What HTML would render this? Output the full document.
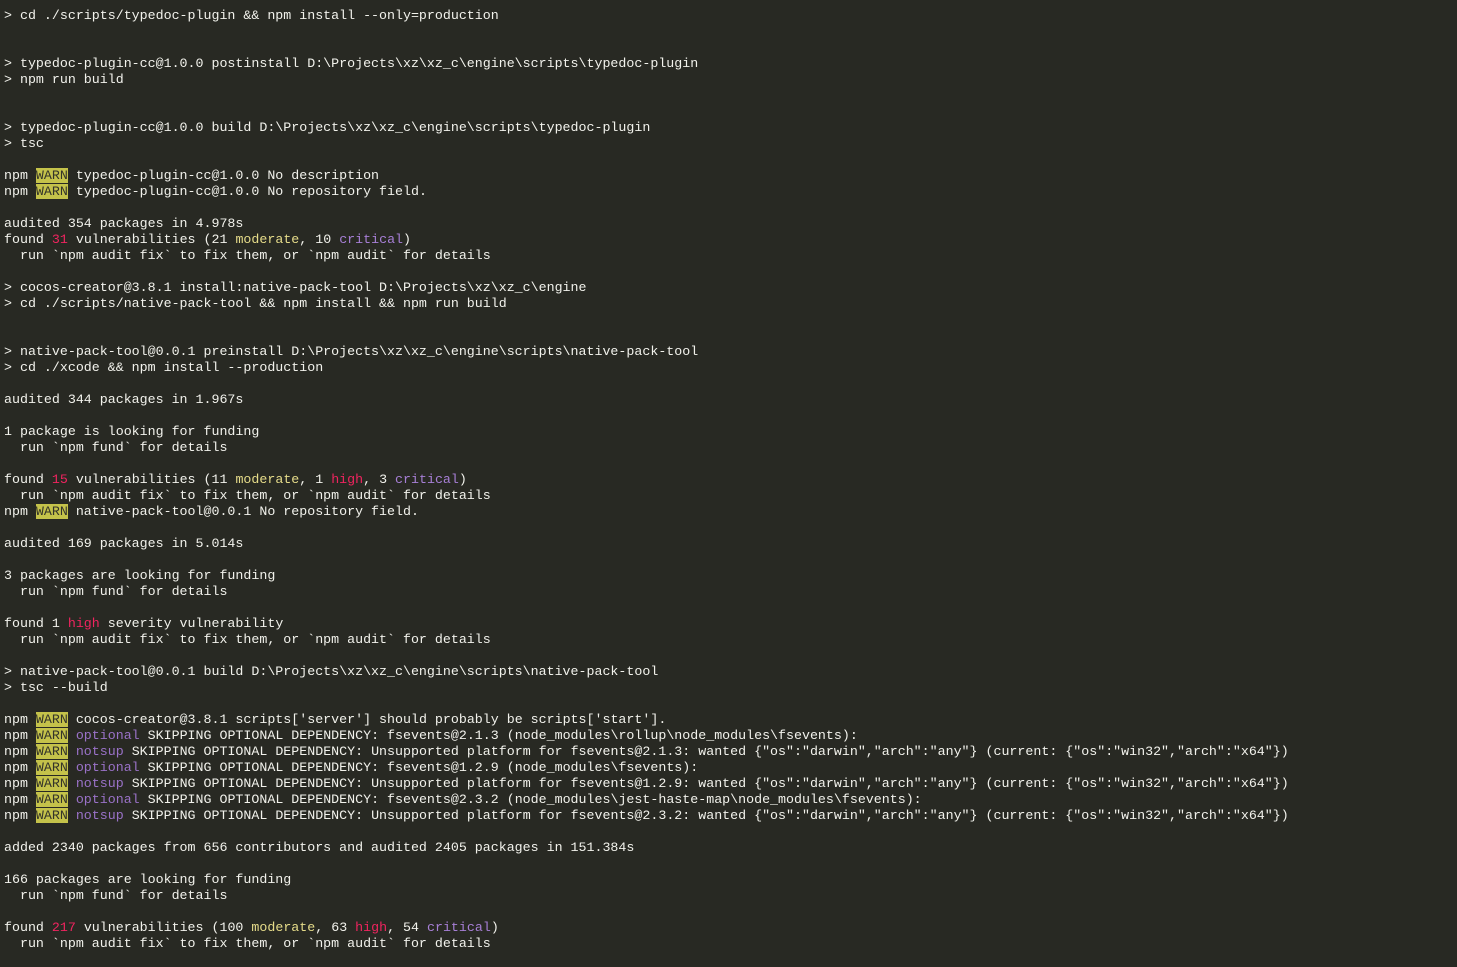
<!DOCTYPE html>
<html><head><meta charset="utf-8"><style>
html,body{margin:0;padding:0;background:#282923;width:1457px;height:967px;overflow:hidden}
pre{margin:0;position:absolute;left:4px;top:8px;font-family:"Liberation Mono",monospace;font-size:13.3px;line-height:16px;color:#f2f2ec}
.w{background:#c4c24a;color:#33332a}
.r{color:#f0245f}
.y{color:#e6dc8a}
.p{color:#a77fd6}
.o{color:#9a72c8}
</style></head><body>
<pre>&gt; cd ./scripts/typedoc-plugin &amp;&amp; npm install --only=production


&gt; typedoc-plugin-cc@1.0.0 postinstall D:\Projects\xz\xz_c\engine\scripts\typedoc-plugin
&gt; npm run build


&gt; typedoc-plugin-cc@1.0.0 build D:\Projects\xz\xz_c\engine\scripts\typedoc-plugin
&gt; tsc

npm <span class="w">WARN</span> typedoc-plugin-cc@1.0.0 No description
npm <span class="w">WARN</span> typedoc-plugin-cc@1.0.0 No repository field.

audited 354 packages in 4.978s
found <span class="r">31</span> vulnerabilities (21 <span class="y">moderate</span>, 10 <span class="p">critical</span>)
  run `npm audit fix` to fix them, or `npm audit` for details

&gt; cocos-creator@3.8.1 install:native-pack-tool D:\Projects\xz\xz_c\engine
&gt; cd ./scripts/native-pack-tool &amp;&amp; npm install &amp;&amp; npm run build


&gt; native-pack-tool@0.0.1 preinstall D:\Projects\xz\xz_c\engine\scripts\native-pack-tool
&gt; cd ./xcode &amp;&amp; npm install --production

audited 344 packages in 1.967s

1 package is looking for funding
  run `npm fund` for details

found <span class="r">15</span> vulnerabilities (11 <span class="y">moderate</span>, 1 <span class="r">high</span>, 3 <span class="p">critical</span>)
  run `npm audit fix` to fix them, or `npm audit` for details
npm <span class="w">WARN</span> native-pack-tool@0.0.1 No repository field.

audited 169 packages in 5.014s

3 packages are looking for funding
  run `npm fund` for details

found 1 <span class="r">high</span> severity vulnerability
  run `npm audit fix` to fix them, or `npm audit` for details

&gt; native-pack-tool@0.0.1 build D:\Projects\xz\xz_c\engine\scripts\native-pack-tool
&gt; tsc --build

npm <span class="w">WARN</span> cocos-creator@3.8.1 scripts['server'] should probably be scripts['start'].
npm <span class="w">WARN</span> <span class="o">optional</span> SKIPPING OPTIONAL DEPENDENCY: fsevents@2.1.3 (node_modules\rollup\node_modules\fsevents):
npm <span class="w">WARN</span> <span class="o">notsup</span> SKIPPING OPTIONAL DEPENDENCY: Unsupported platform for fsevents@2.1.3: wanted {"os":"darwin","arch":"any"} (current: {"os":"win32","arch":"x64"})
npm <span class="w">WARN</span> <span class="o">optional</span> SKIPPING OPTIONAL DEPENDENCY: fsevents@1.2.9 (node_modules\fsevents):
npm <span class="w">WARN</span> <span class="o">notsup</span> SKIPPING OPTIONAL DEPENDENCY: Unsupported platform for fsevents@1.2.9: wanted {"os":"darwin","arch":"any"} (current: {"os":"win32","arch":"x64"})
npm <span class="w">WARN</span> <span class="o">optional</span> SKIPPING OPTIONAL DEPENDENCY: fsevents@2.3.2 (node_modules\jest-haste-map\node_modules\fsevents):
npm <span class="w">WARN</span> <span class="o">notsup</span> SKIPPING OPTIONAL DEPENDENCY: Unsupported platform for fsevents@2.3.2: wanted {"os":"darwin","arch":"any"} (current: {"os":"win32","arch":"x64"})

added 2340 packages from 656 contributors and audited 2405 packages in 151.384s

166 packages are looking for funding
  run `npm fund` for details

found <span class="r">217</span> vulnerabilities (100 <span class="y">moderate</span>, 63 <span class="r">high</span>, 54 <span class="p">critical</span>)
  run `npm audit fix` to fix them, or `npm audit` for details</pre>
</body></html>
